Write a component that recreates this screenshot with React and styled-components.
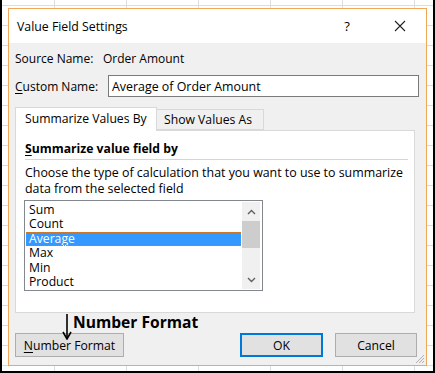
import React from "react";
import styled, { createGlobalStyle } from "styled-components";

const GlobalStyle = createGlobalStyle`
  html, body {
    margin: 0;
    padding: 0;
    background: #ffffff;
  }
  body {
    font-family: "Open Sans", "Noto Sans", sans-serif;
    color: #000;
  }
`;

const Sheet = styled.div`
  width: 435px;
  height: 373px;
  box-sizing: border-box;
  border: 2px solid #000;
  border-top: none;
  padding: 8px 6px 5px 6px;
  background-color: #fff;
  background-image: linear-gradient(to right, #dcdcdc 1px, transparent 1px),
    linear-gradient(to bottom, #dcdcdc 1px, transparent 1px);
  background-size: 72px 100%, 100% 20px;
  background-position: 124px 0, 0 5px;
`;

const Dialog = styled.div`
  position: relative;
  width: 419px;
  height: 358px;
  box-sizing: border-box;
  border: 1px solid #f1a758;
  background: #f0f0f0;
  display: flex;
  flex-direction: column;
`;

const TitleBar = styled.div`
  height: 34px;
  flex-shrink: 0;
  background: #fff;
  display: flex;
  align-items: center;
  padding-left: 8px;
  padding-right: 3px;
`;

const Title = styled.div`
  font-size: 12.3px;
`;

const HelpButton = styled.div`
  margin-left: auto;
  width: 30px;
  text-align: center;
  font-size: 13px;
`;

const CloseButton = styled.div`
  width: 46px;
  margin-left: 15px;
  display: flex;
  justify-content: center;
`;

const Body = styled.div`
  flex: 1;
  display: flex;
  flex-direction: column;
  padding: 7px 7px 0 6px;
  font-size: 12px;
`;

const FieldRow = styled.div`
  display: flex;
  align-items: center;
  margin-top: ${(p) => p.$top || 0}px;
  min-height: 16px;
`;

const FieldLabel = styled.div`
  width: ${(p) => p.$width}px;
  flex-shrink: 0;
`;

const TextInput = styled.div`
  width: 311px;
  height: 22px;
  box-sizing: border-box;
  border: 1px solid #7a7a7a;
  background: #fff;
  padding-left: 3px;
  display: flex;
  align-items: center;
  font-size: 12.4px;
`;

const Mnemonic = styled.span`
  text-decoration: underline;
  text-underline-offset: 2px;
`;

const TabStrip = styled.div`
  margin-top: 10px;
  display: flex;
  align-items: flex-end;
  height: 23px;
  position: relative;
  z-index: 1;
`;

const Tab = styled.div`
  box-sizing: border-box;
  width: ${(p) => p.$width}px;
  height: ${(p) => (p.$active ? 24 : 21)}px;
  margin-bottom: ${(p) => (p.$active ? -1 : 0)}px;
  background: ${(p) => (p.$active ? "#fff" : "#f0f0f0")};
  border: 1px solid #d9d9d9;
  border-bottom: ${(p) => (p.$active ? "none" : "1px solid #d9d9d9")};
  border-left: ${(p) => (p.$active ? "1px solid #d9d9d9" : "none")};
  display: flex;
  align-items: center;
  padding-left: ${(p) => (p.$active ? 9 : 7)}px;
  padding-bottom: ${(p) => (p.$active ? 2 : 0)}px;
  font-size: 12.2px;
  white-space: nowrap;
`;

const Panel = styled.div`
  width: 400px;
  height: 183px;
  box-sizing: border-box;
  background: #fff;
  border: 1px solid #d9d9d9;
  padding: 10px 6px 0 9px;
  display: flex;
  flex-direction: column;
`;

const SectionHeading = styled.div`
  font-weight: 700;
  font-size: 12.2px;
  line-height: 16px;
  padding-bottom: 2px;
  border-bottom: 1px solid #d5d5d5;
  width: 383px;
`;

const Description = styled.div`
  margin-top: 5px;
  line-height: 16px;
  font-size: 12.4px;
  white-space: nowrap;
`;

const ListBox = styled.div`
  margin-top: 3px;
  margin-left: -1px;
  width: 239px;
  height: 91px;
  box-sizing: border-box;
  border: 1px solid #828790;
  background: #fff;
  display: flex;
`;

const ListItems = styled.div`
  flex: 1;
  padding: 2px 1px 0 1px;
  overflow: hidden;
`;

const ListItem = styled.div`
  height: 14.4px;
  line-height: 14.4px;
  padding-left: 3px;
  font-size: 12.2px;
  box-sizing: border-box;
  background: ${(p) => (p.$selected ? "#3399ff" : "transparent")};
  color: ${(p) => (p.$selected ? "#fff" : "#000")};
  outline: ${(p) => (p.$selected ? "1px dotted #d27a2c" : "none")};
  outline-offset: -1px;
`;

const ScrollBar = styled.div`
  width: 18px;
  margin: 1px 2px 1px 0;
  background: #f0f0f0;
  display: flex;
  flex-direction: column;
  align-items: stretch;
`;

const ScrollArrow = styled.div`
  height: 19px;
  display: flex;
  align-items: center;
  justify-content: center;
`;

const ScrollThumb = styled.div`
  height: 27px;
  background: #cdcdcd;
`;

const ScrollTrack = styled.div`
  flex: 1;
`;

const ButtonRow = styled.div`
  position: relative;
  margin-top: 20px;
  display: flex;
  align-items: center;
  padding-right: 2px;
`;

const Button = styled.div`
  box-sizing: border-box;
  width: ${(p) => p.$width}px;
  height: 24px;
  margin-left: ${(p) => p.$gap || 0}px;
  background: #e1e1e1;
  border: ${(p) => (p.$default ? "2px solid #0078d7" : "1px solid #adadad")};
  display: flex;
  align-items: center;
  justify-content: center;
  font-size: 12.2px;
`;

const Spacer = styled.div`
  flex: 1;
`;

const Annotation = styled.div`
  position: absolute;
  left: 47px;
  top: -19px;
  display: flex;
  align-items: flex-start;
  gap: 1px;
`;

const AnnotationText = styled.div`
  font-family: "Open Sans", "Noto Sans", sans-serif;
  font-weight: 700;
  font-size: 15.6px;
  line-height: 19px;
  margin-top: -1px;
`;

const Grip = styled.svg`
  position: absolute;
  right: 1px;
  bottom: 1px;
`;

const items = ["Sum", "Count", "Average", "Max", "Min", "Product"];

export default function App() {
  return (
    <>
      <GlobalStyle />
      <Sheet>
        <Dialog>
          <TitleBar>
            <Title>Value Field Settings</Title>
            <HelpButton>?</HelpButton>
            <CloseButton>
              <svg width="12" height="12" viewBox="0 0 12 12">
                <path d="M1 1 L11 11 M11 1 L1 11" stroke="#222" strokeWidth="1.1" fill="none" />
              </svg>
            </CloseButton>
          </TitleBar>
          <Body>
            <FieldRow $top={0}>
              <FieldLabel $width={88}>Source Name:</FieldLabel>
              <div>Order Amount</div>
            </FieldRow>
            <FieldRow $top={8}>
              <FieldLabel $width={93}>
                <Mnemonic>C</Mnemonic>ustom Name:
              </FieldLabel>
              <TextInput>Average of Order Amount</TextInput>
            </FieldRow>
            <TabStrip>
              <Tab $active $width={142}>Summarize Values By</Tab>
              <Tab $width={107}>Show Values As</Tab>
            </TabStrip>
            <Panel>
              <SectionHeading>
                <Mnemonic>S</Mnemonic>ummarize value field by
              </SectionHeading>
              <Description>
                Choose the type of calculation that you want to use to summarize
                <br />
                data from the selected field
              </Description>
              <ListBox>
                <ListItems>
                  {items.map((it) => (
                    <ListItem key={it} $selected={it === "Average"}>
                      {it}
                    </ListItem>
                  ))}
                </ListItems>
                <ScrollBar>
                  <ScrollArrow>
                    <svg width="9" height="6" viewBox="0 0 9 6">
                      <path d="M1 5 L4.5 1.5 L8 5" stroke="#606060" strokeWidth="1.4" fill="none" />
                    </svg>
                  </ScrollArrow>
                  <ScrollThumb />
                  <ScrollTrack />
                  <ScrollArrow>
                    <svg width="9" height="6" viewBox="0 0 9 6">
                      <path d="M1 1 L4.5 4.5 L8 1" stroke="#606060" strokeWidth="1.4" fill="none" />
                    </svg>
                  </ScrollArrow>
                </ScrollBar>
              </ListBox>
            </Panel>
            <ButtonRow>
              <Button $width={109}>
                <span>
                  <Mnemonic>N</Mnemonic>umber Format
                </span>
              </Button>
              <Spacer />
              <Button $width={83} $default>
                OK
              </Button>
              <Button $width={82} $gap={12}>
                Cancel
              </Button>
              <Annotation>
                <svg width="10" height="26" viewBox="0 0 10 26">
                  <path d="M5 0 L5 24" stroke="#000" strokeWidth="1.6" />
                  <path d="M1 18 L5 25 L9 18" stroke="#000" strokeWidth="1.6" fill="none" />
                </svg>
                <AnnotationText>Number Format</AnnotationText>
              </Annotation>
            </ButtonRow>
          </Body>
          <Grip width="10" height="10" viewBox="0 0 10 10">
            <path d="M9 1 L1 9 M9 4 L4 9 M9 7 L7 9" stroke="#b0b0b0" strokeWidth="1" />
          </Grip>
        </Dialog>
      </Sheet>
    </>
  );
}
